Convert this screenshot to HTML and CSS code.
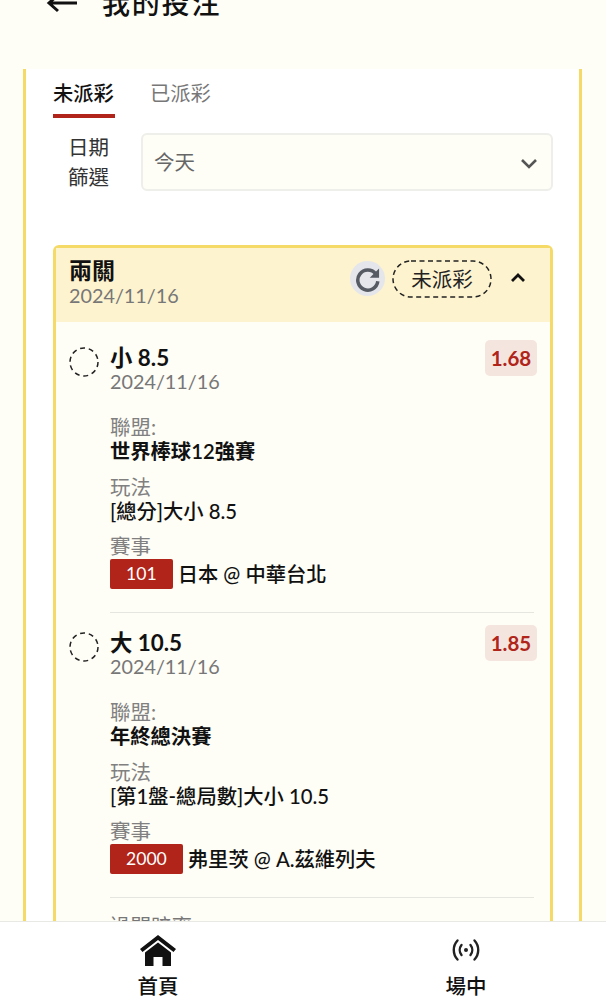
FILE: index.html
```html
<!DOCTYPE html>
<html lang="zh-Hant">
<head>
    <meta charset="UTF-8">
    <meta name="viewport" content="width=device-width, initial-scale=1.0">
    <title>我的投注</title>
    <link rel="stylesheet" href="styles.css">
</head>
<body>
    <div class="page">
        <header class="topbar">
            <svg class="back-icon" viewBox="0 0 32 20" width="32" height="20">
                <path d="M31 5H4M12 -3L3 5l9 8" fill="none" stroke="#111" stroke-width="3"/>
            </svg>
            <h1>我的投注</h1>
        </header>

        <main class="card">
            <div class="tabs">
                <div class="tab active">未派彩</div>
                <div class="tab">已派彩</div>
            </div>

            <div class="filter">
                <div class="filter-label">日期<br>篩選</div>
                <div class="select">
                    <span>今天</span>
                    <svg viewBox="0 0 18 12" width="18" height="12">
                        <path d="M2 2l7 7 7-7" fill="none" stroke="#555" stroke-width="2.6"/>
                    </svg>
                </div>
            </div>

            <section class="ticket">
                <div class="ticket-head">
                    <div class="ticket-title">
                        <strong>兩關</strong>
                        <span>2024/11/16</span>
                    </div>
                    <div class="refresh">
                        <svg viewBox="0 0 24 24" width="28" height="28">
                            <path d="M18.6 7.6A8.6 8.6 0 1 0 20.4 14" fill="none" stroke="#555a63" stroke-width="3"/>
                            <path d="M21.5 3v8h-8z" fill="#555a63"/>
                        </svg>
                    </div>
                    <div class="status">
                        <svg class="status-line" viewBox="0 0 100 38" width="100" height="38">
                            <rect x="1" y="1" width="98" height="36" rx="18" fill="none" stroke="#222" stroke-width="1.500" stroke-dasharray="5 3.500"/>
                        </svg>
                        未派彩
                    </div>
                    <svg class="collapse" viewBox="0 0 16 12" width="16" height="12">
                        <path d="M2 9l6-6 6 6" fill="none" stroke="#111" stroke-width="2.8"/>
                    </svg>
                </div>

                <div class="ticket-body">
                    <div class="bet">
                        <div class="bet-top">
                            <svg class="pending" viewBox="0 0 30 30" width="30" height="30">
                                <circle cx="15" cy="15" r="14" fill="none" stroke="#222" stroke-width="1.500" stroke-dasharray="5 3.800"/>
                            </svg>
                            <div class="bet-name">
                                <strong>小 8.5</strong>
                                <span>2024/11/16</span>
                            </div>
                            <div class="odds">1.68</div>
                        </div>
                        <div class="field">
                            <span>聯盟:</span>
                            <strong class="league">世界棒球12強賽</strong>
                        </div>
                        <div class="field">
                            <span>玩法</span>
                            <strong>[總分]大小 8.5</strong>
                        </div>
                        <div class="field">
                            <span>賽事</span>
                            <div class="match">
                                <div class="match-no">101</div>
                                <strong>日本 @ 中華台北</strong>
                            </div>
                        </div>
                    </div>
                    <div class="bet-rule"></div>

                    <div class="bet">
                        <div class="bet-top">
                            <svg class="pending" viewBox="0 0 30 30" width="30" height="30">
                                <circle cx="15" cy="15" r="14" fill="none" stroke="#222" stroke-width="1.500" stroke-dasharray="5 3.800"/>
                            </svg>
                            <div class="bet-name">
                                <strong>大 10.5</strong>
                                <span>2024/11/16</span>
                            </div>
                            <div class="odds">1.85</div>
                        </div>
                        <div class="field">
                            <span>聯盟:</span>
                            <strong class="league">年終總決賽</strong>
                        </div>
                        <div class="field">
                            <span>玩法</span>
                            <strong>[第1盤-總局數]大小 10.5</strong>
                        </div>
                        <div class="field">
                            <span>賽事</span>
                            <div class="match">
                                <div class="match-no">2000</div>
                                <strong>弗里茨 @ A.茲維列夫</strong>
                            </div>
                        </div>
                    </div>
                    <div class="bet-rule"></div>

                    <div class="summary">過關賠率</div>
                </div>
            </section>
        </main>
    </div>

    <nav class="bottom-nav">
        <div class="nav-item">
            <svg viewBox="0 0 36 32" width="36" height="32">
                <path d="M18 1L0 15l2.500 3L18 6l15.500 12 2.500-3z" fill="#111"/>
                <path d="M5 18.500L18 8.500l13 10V32h-8.500v-9h-9v9H5z" fill="#111"/>
            </svg>
            <span>首頁</span>
        </div>
        <div class="nav-item">
            <svg viewBox="0 0 28 24" width="28" height="24">
                <g fill="none" stroke="#222" stroke-width="2.400" stroke-linecap="round">
                    <path d="M5.500 2.500a14 14 0 0 0 0 19M22.500 2.500a14 14 0 0 1 0 19"/>
                    <path d="M9.500 7a8 8 0 0 0 0 10M18.500 7a8 8 0 0 1 0 10"/>
                </g>
                <circle cx="14" cy="12" r="2" fill="#222"/>
            </svg>
            <span>場中</span>
        </div>
    </nav>
</body>
</html>
```

FILE: styles.css
```css
* {
    box-sizing: border-box;
}
html, body {
    height: 100%;
}
body {
    margin: 0;
    overflow: hidden;
    background-color: #fefdf6;
    color: #111;
    font-family: Lato, "Noto Sans CJK TC", sans-serif;
    font-size: 20.500px;
}
.page {
    height: 921px;
    overflow: hidden;
}
.topbar {
    height: 69px;
    padding-left: 46px;
    display: flex;
    align-items: flex-start;
}
.back-icon {
    margin-top: -2px;
    flex: none;
}
.topbar h1 {
    margin: -17px 0 0 24px;
    font-size: 28px;
    line-height: 40px;
    font-weight: 500;
    letter-spacing: 1.800px;
}
.card {
    margin: 0 24px 0 23px;
    padding: 0 26px 0 27px;
    height: 900px;
    background: #fff;
    border-left: 3px solid #f6da68;
    border-right: 3px solid #f6da68;
}
.tabs {
    display: flex;
    gap: 35px;
    height: 49px;
}
.tab {
    width: 62px;
    height: 49px;
    padding-top: 9px;
    font-size: 20.300px;
    line-height: 30px;
    color: #777;
    white-space: nowrap;
}
.tab.active {
    color: #111;
    font-weight: 500;
    border-bottom: 4px solid #b0241a;
}
.filter {
    display: flex;
    align-items: center;
    margin-top: 15px;
    height: 58px;
}
.filter-label {
    width: 88px;
    padding-left: 15px;
    line-height: 30px;
    color: #333;
}
.select {
    flex: 1;
    height: 58px;
    padding: 0 13px 0 11px;
    display: flex;
    align-items: center;
    justify-content: space-between;
    background: #fefdf6;
    border: 2px solid #eeeeea;
    border-radius: 6px;
    color: #666;
}
.select span {
    margin-top: -2px;
}
.select svg {
    margin-top: 3px;
}
.ticket {
    margin-top: 54px;
    border: 3px solid #f6da68;
    border-radius: 6px;
    background: #fefdf6;
}
.ticket-head {
    height: 74px;
    padding: 9px 24px 0 13px;
    display: flex;
    align-items: flex-start;
    background: #fdf3cf;
}
.ticket-title {
    flex: 1;
    display: flex;
    flex-direction: column;
}
.ticket-title strong {
    font-size: 23px;
    line-height: 26px;
}
.ticket-title span {
    font-size: 19.800px;
    line-height: 24px;
    color: #777;
}
.refresh {
    width: 35px;
    height: 35px;
    margin-top: 4px;
    border-radius: 50%;
    background: #e4e6eb;
    display: flex;
    align-items: center;
    justify-content: center;
}
.status {
    position: relative;
    width: 100px;
    height: 38px;
    margin-left: 7px;
    margin-top: 3px;
    text-align: center;
    line-height: 38px;
    color: #222;
}
.status-line {
    position: absolute;
    left: 0;
    top: 0;
}
.collapse {
    margin: 15px 0 0 18px;
}
.ticket-body {
    padding: 18px 13px 0 13px;
}
.bet {
    height: 272px;
}
.bet-rule {
    margin: 0 3px 12px 41px;
    border-top: 1px solid #e6e6e0;
}
.bet-top {
    display: flex;
    align-items: flex-start;
}
.pending {
    margin-top: 7px;
    flex: none;
}
.bet-name {
    flex: 1;
    margin-left: 11px;
    margin-top: 4px;
    display: flex;
    flex-direction: column;
}
.bet-name strong {
    font-size: 22.400px;
    line-height: 27px;
    font-weight: 700;
}
.bet-name span {
    font-size: 19.800px;
    line-height: 20px;
    color: #777;
}
.odds {
    width: 52px;
    height: 36px;
    background: #f4e5de;
    border-radius: 5px;
    text-align: center;
    line-height: 36px;
    font-weight: 700;
    color: #b0241a;
}
.field {
    margin-left: 41px;
    margin-top: 10.500px;
    display: flex;
    flex-direction: column;
}
.bet-top + .field {
    margin-top: 24px;
}
.field span {
    line-height: 24px;
    color: #808080;
}
.field strong {
    font-size: 20.300px;
    line-height: 25px;
    font-weight: 500;
}
.field .league {
    font-weight: 600;
}
.match {
    display: flex;
    align-items: center;
    gap: 5px;
    margin-top: 1px;
}
.match-no {
    padding: 0 16px;
    height: 30px;
    background: #b0241a;
    border-radius: 2px;
    color: #fff;
    font-size: 17.600px;
    line-height: 30px;
}
.summary {
    margin: 3px 0 0 41px;
    color: #777;
}
.bottom-nav {
    height: 79px;
    border-top: 1px solid #e8e8e4;
    background: #fff;
    display: flex;
    justify-content: space-between;
    padding: 12px 109px 0 127px;
}
.nav-item {
    width: 62px;
    display: flex;
    flex-direction: column;
    align-items: center;
    gap: 6px;
}
.nav-item svg {
    height: 32px;
}
.nav-item span {
    font-size: 20.500px;
    line-height: 28px;
    font-weight: 500;
}
```
